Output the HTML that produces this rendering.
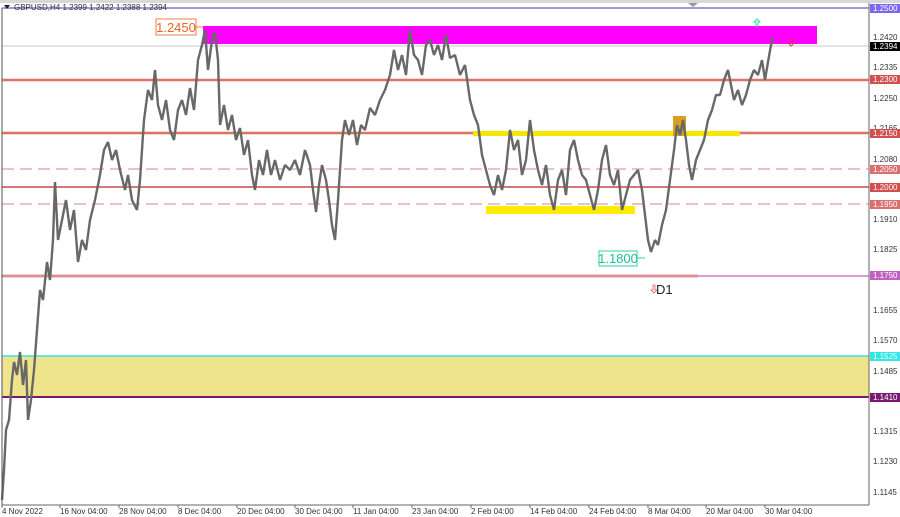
<!DOCTYPE html>
<html><head><meta charset="utf-8"><style>
html,body{margin:0;padding:0;background:#fff;width:900px;height:517px;overflow:hidden;font-family:"Liberation Sans",sans-serif}
svg text{font-family:"Liberation Sans",sans-serif}
</style></head><body>
<svg width="900" height="517" viewBox="0 0 900 517" xmlns="http://www.w3.org/2000/svg">
<rect x="0" y="0" width="900" height="517" fill="#fff"/>
<rect x="0" y="0" width="900" height="3" fill="#d8d8d8"/>
<polygon points="688,3 698,3 693,7" fill="#999"/>
<rect x="2" y="356" width="867" height="41" fill="#efe38b"/>
<line x1="2" y1="356" x2="869" y2="356" stroke="#33e6e6" stroke-width="1.5"/>
<line x1="2" y1="397" x2="869" y2="397" stroke="#7a1a6e" stroke-width="2"/>
<line x1="2" y1="8" x2="869" y2="8" stroke="#6a5acd" stroke-width="1.2"/>
<line x1="2" y1="46" x2="869" y2="46" stroke="#c8c8c8" stroke-width="1"/>
<line x1="2" y1="80" x2="869" y2="80" stroke="#fbd8c8" stroke-width="4"/>
<line x1="2" y1="80" x2="869" y2="80" stroke="#d05050" stroke-width="1.5"/>
<line x1="2" y1="133" x2="869" y2="133" stroke="#fbd8c8" stroke-width="4"/>
<line x1="2" y1="133" x2="869" y2="133" stroke="#d05050" stroke-width="1.5"/>
<line x1="2" y1="169" x2="869" y2="169" stroke="#e0b0b0" stroke-width="1.5" stroke-dasharray="12,6"/>
<line x1="2" y1="187" x2="869" y2="187" stroke="#c84848" stroke-width="1.5"/>
<line x1="2" y1="204" x2="869" y2="204" stroke="#e0b0b0" stroke-width="1.5" stroke-dasharray="12,6"/>
<line x1="2" y1="276" x2="698" y2="276" stroke="#fbd0b0" stroke-width="4"/>
<line x1="2" y1="276" x2="869" y2="276" stroke="#c060c0" stroke-width="1.2"/>
<rect x="203" y="26" width="614" height="18" fill="#ff00ff"/>
<rect x="473" y="131" width="267" height="5" fill="#f5e800"/>
<rect x="486" y="206" width="149" height="8" fill="#ffec00"/>
<rect x="673" y="116" width="13" height="20" fill="#d8a020"/>
<polyline fill="none" stroke="#686868" stroke-width="2.4" stroke-linejoin="bevel" points="2,500 4,470 6,430 9,420 12,380 14,362 17,375 20,352 23,385 26,360 28,420 31,400 34,370 37,330 40,290 43,300 47,262 50,280 53,240 55,182 58,240 62,220 66,200 70,230 74,210 78,262 82,240 86,250 90,220 95,200 100,175 104,150 108,142 112,160 116,150 120,170 125,190 128,175 132,200 137,210 140,180 144,120 148,90 152,100 155,70 158,105 162,120 166,100 170,130 174,140 178,110 182,100 186,115 190,88 194,110 198,60 202,45 205,30 208,70 212,40 215,32 218,60 220,125 224,105 228,130 232,115 236,140 240,128 244,155 248,140 252,175 255,190 259,160 263,175 267,150 271,175 275,160 280,180 285,165 290,170 295,160 300,175 305,150 310,165 313,190 316,212 319,185 322,165 326,180 329,200 332,225 335,240 338,200 342,140 345,120 349,135 353,120 357,145 361,125 365,130 370,108 375,115 380,100 385,90 390,75 394,50 398,70 402,55 406,75 410,30 414,55 418,60 422,75 426,45 430,40 434,55 438,45 442,60 446,35 450,58 455,55 460,75 465,65 470,100 474,115 478,125 482,155 486,170 490,185 494,195 498,175 502,190 506,170 510,130 514,150 518,140 522,175 526,160 530,120 534,150 538,170 542,185 546,165 550,195 554,210 558,180 562,170 566,195 570,150 574,140 578,160 582,175 586,180 590,195 594,210 598,190 602,160 606,145 610,175 614,185 618,170 622,210 626,195 630,180 634,175 638,170 642,190 645,215 648,240 651,252 655,240 658,245 662,225 666,210 670,180 674,150 677,125 680,135 683,120 686,140 689,165 692,180 696,160 700,150 704,140 708,120 712,110 716,95 720,95 724,80 728,70 731,85 734,100 738,90 742,105 746,95 750,80 754,70 758,75 762,60 765,80 768,62 771,45 773,38"/>
<path d="M757,19 l-3,3 h2 v4 h2 v-4 h2 z" fill="none" stroke="#30e0a0" stroke-width="1"/>
<path d="M791,46 l-3,-3 h2 v-4 h2 v4 h2 z" fill="none" stroke="#e03060" stroke-width="1"/>
<rect x="156" y="19" width="40" height="16" fill="#fff" stroke="#f08040"/>
<text x="176" y="32" font-size="13" fill="#f06020" text-anchor="middle">1.2450</text>
<line x1="196" y1="27" x2="203" y2="27" stroke="#f08040"/>
<rect x="599" y="251" width="38" height="15" fill="#fff" stroke="#30d0a0"/>
<text x="618" y="263" font-size="13" fill="#20c090" text-anchor="middle">1.1800</text>
<line x1="637" y1="258" x2="645" y2="258" stroke="#30d0a0"/>
<text x="656" y="294" font-size="13" fill="#222">D1</text>
<path d="M653,285 v5 h-2 l3,3 l3,-3 h-2 v-5 z" fill="none" stroke="#e06060" stroke-width="0.8"/>
<polygon points="4,5 10,5 7,9" fill="#222"/>
<text x="14" y="10" font-size="8" fill="#333">GBPUSD,H4  1.2399 1.2422 1.2388 1.2394</text>
<line x1="2" y1="8" x2="2" y2="505" stroke="#555"/>
<line x1="869" y1="3" x2="869" y2="505" stroke="#666"/>
<line x1="2" y1="505" x2="869" y2="505" stroke="#666"/>
<g font-size="8" fill="#333">
<text x="873" y="40">1.2420</text>
<text x="873" y="70">1.2335</text>
<text x="873" y="101">1.2250</text>
<text x="873" y="131">1.2165</text>
<text x="873" y="162">1.2080</text>
<text x="873" y="222">1.1910</text>
<text x="873" y="252">1.1825</text>
<text x="873" y="313">1.1655</text>
<text x="873" y="343">1.1570</text>
<text x="873" y="374">1.1485</text>
<text x="873" y="434">1.1315</text>
<text x="873" y="464">1.1230</text>
<text x="873" y="495">1.1145</text>
</g>
<g font-size="8" fill="#fff">
<rect x="870" y="4" width="30" height="9" fill="#7b68ee"/><text x="873" y="11">1.2500</text>
<rect x="870" y="42" width="30" height="9" fill="#000"/><text x="873" y="49">1.2394</text>
<rect x="870" y="75" width="30" height="9" fill="#d05050"/><text x="873" y="82">1.2300</text>
<rect x="870" y="129" width="30" height="9" fill="#d05050"/><text x="873" y="136">1.2150</text>
<rect x="870" y="165" width="30" height="9" fill="#d87070"/><text x="873" y="172">1.2050</text>
<rect x="870" y="183" width="30" height="9" fill="#d05050"/><text x="873" y="190">1.2000</text>
<rect x="870" y="200" width="30" height="9" fill="#d87070"/><text x="873" y="207">1.1950</text>
<rect x="870" y="271" width="30" height="9" fill="#c060c0"/><text x="873" y="278">1.1750</text>
<rect x="870" y="352" width="30" height="9" fill="#33e6e6"/><text x="873" y="359">1.1525</text>
<rect x="870" y="393" width="30" height="9" fill="#7a1a6e"/><text x="873" y="400">1.1410</text>
</g>
<g font-size="8" fill="#333">
<text x="2" y="514">4 Nov 2022</text>
<text x="60" y="514">16 Nov 04:00</text>
<text x="119" y="514">28 Nov 04:00</text>
<text x="178" y="514">8 Dec 04:00</text>
<text x="237" y="514">20 Dec 04:00</text>
<text x="295" y="514">30 Dec 04:00</text>
<text x="353" y="514">11 Jan 04:00</text>
<text x="412" y="514">23 Jan 04:00</text>
<text x="471" y="514">2 Feb 04:00</text>
<text x="530" y="514">14 Feb 04:00</text>
<text x="589" y="514">24 Feb 04:00</text>
<text x="648" y="514">8 Mar 04:00</text>
<text x="706" y="514">20 Mar 04:00</text>
<text x="765" y="514">30 Mar 04:00</text>
</g>
<g stroke="#666">
<line x1="2" y1="505" x2="2" y2="508"/><line x1="60" y1="505" x2="60" y2="508"/><line x1="119" y1="505" x2="119" y2="508"/><line x1="178" y1="505" x2="178" y2="508"/><line x1="237" y1="505" x2="237" y2="508"/><line x1="295" y1="505" x2="295" y2="508"/><line x1="353" y1="505" x2="353" y2="508"/><line x1="412" y1="505" x2="412" y2="508"/><line x1="471" y1="505" x2="471" y2="508"/><line x1="530" y1="505" x2="530" y2="508"/><line x1="589" y1="505" x2="589" y2="508"/><line x1="648" y1="505" x2="648" y2="508"/><line x1="706" y1="505" x2="706" y2="508"/><line x1="765" y1="505" x2="765" y2="508"/>
</g>
</svg>
</body></html>
